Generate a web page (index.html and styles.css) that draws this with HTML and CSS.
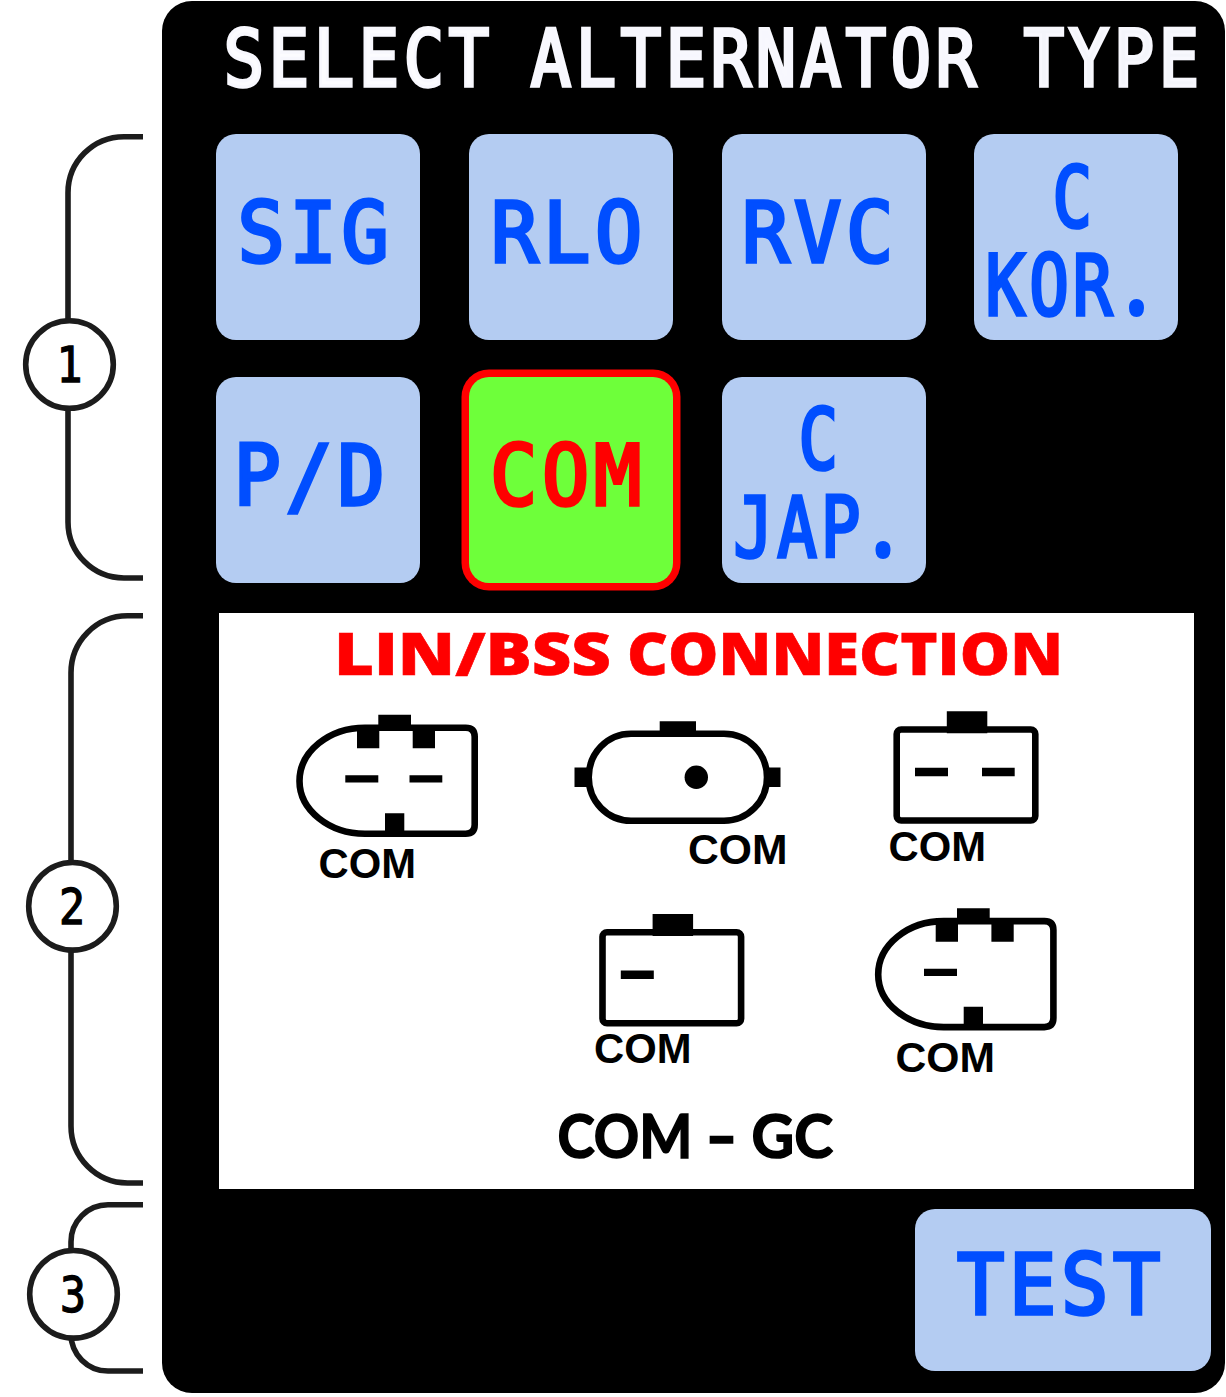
FILE: index.html
```html
<!DOCTYPE html>
<html lang="en">
<head>
<meta charset="utf-8">
<title>Select alternator type</title>
<link rel="stylesheet" href="styles.css">
</head>
<body>
<main class="page">
  <svg class="callouts" viewBox="0 0 162 1397">
    <g class="bracket">
      <path d="M143 136.7H124A56 56 0 0 0 68 192.700V522A56 56 0 0 0 124 578H143"/>
      <path d="M143 615.800H127.500A56.500 57 0 0 0 71 672.800V1126A56.500 57 0 0 0 127.500 1183H143"/>
      <path d="M143 1204.800H108A37 37 0 0 0 71 1241.800V1334A37 37 0 0 0 108 1371H143"/>
      <circle cx="69.500" cy="364.500" r="43.800"/>
      <circle cx="72.500" cy="906.300" r="43.800"/>
      <circle cx="73.500" cy="1294.300" r="43.800"/>
    </g>
    <g class="number">
      <text x="56.500" y="381.500" textLength="26" lengthAdjust="spacingAndGlyphs">1</text>
      <text x="59" y="923.500" textLength="26" lengthAdjust="spacingAndGlyphs">2</text>
      <text x="60" y="1311.500" textLength="26" lengthAdjust="spacingAndGlyphs">3</text>
    </g>
  </svg>

  <section class="device">
    <svg class="title" viewBox="162 1 1063 133">
      <text x="223.500" y="85.500" textLength="270" lengthAdjust="spacingAndGlyphs" fill="#fcfcff">SELECT</text>
      <text x="530.500" y="85.500" textLength="450" lengthAdjust="spacingAndGlyphs" fill="#f7f7fe">ALTERNATOR</text>
      <text x="1023.500" y="85.500" textLength="180" lengthAdjust="spacingAndGlyphs" fill="#f4f5fb">TYPE</text>
    </svg>

    <div class="types">
      <button class="key"><svg viewBox="216 134 204 206"><text x="237.500" y="261.500" textLength="156" lengthAdjust="spacingAndGlyphs">SIG</text></svg></button>
      <button class="key"><svg viewBox="469 134 204 206"><text x="491" y="261.500" textLength="156" lengthAdjust="spacingAndGlyphs">RLO</text></svg></button>
      <button class="key"><svg viewBox="722 134 204 206"><text x="742" y="261.500" textLength="156" lengthAdjust="spacingAndGlyphs">RVC</text></svg></button>
      <button class="key"><svg viewBox="974 134 204 206">
        <text x="1052.500" y="226.500" textLength="43.500" lengthAdjust="spacingAndGlyphs">C</text>
        <text x="985.500" y="314.500" textLength="131" lengthAdjust="spacingAndGlyphs">KOR</text>
        <text class="dot" x="1136.500" y="315.500" textLength="25" lengthAdjust="spacingAndGlyphs">.</text></svg></button>
      <button class="key"><svg viewBox="216 377 204 206"><text x="233.500" y="504.500" textLength="156" lengthAdjust="spacingAndGlyphs">P/D</text></svg></button>
      <button class="key selected"><svg viewBox="469 377 204 206"><text x="490" y="504.500" textLength="156" lengthAdjust="spacingAndGlyphs">COM</text></svg></button>
      <button class="key"><svg viewBox="722 377 204 206">
        <text x="798.500" y="468.500" textLength="43.500" lengthAdjust="spacingAndGlyphs">C</text>
        <text x="733.500" y="556.500" textLength="131" lengthAdjust="spacingAndGlyphs">JAP</text>
        <text class="dot" x="883" y="557.500" textLength="25" lengthAdjust="spacingAndGlyphs">.</text></svg></button>
    </div>

    <svg class="diagram" viewBox="219 613 975 576">
      <defs>
        <g id="round-plug">
          <path class="shell" d="M365 727.700H465.700Q474.700 727.700 474.700 736.700V824.700Q474.700 833.700 465.700 833.700H365C329 833.700 299.500 810 299.500 781C299.500 751.500 329 727.700 365 727.700Z"/>
          <path d="M378.300 714.800H411V730H378.300ZM357 728H379.300V748.300H357ZM412.700 728H435V748.300H412.700ZM385 813.300H404.300V833H385ZM345.300 775.300H378.300V782.500H345.300Z"/>
        </g>
        <g id="square-plug">
          <rect class="shell" x="896.700" y="729.500" width="138.600" height="91" rx="4.500"/>
          <path d="M946.800 711.300H987.300V733.300H946.800ZM915 767.700H948V776.300H915Z"/>
        </g>
      </defs>
      <g class="heading">
        <text x="334" y="674.500" textLength="277" lengthAdjust="spacingAndGlyphs">LIN/BSS</text>
        <text x="627" y="674.500" textLength="436" lengthAdjust="spacingAndGlyphs">CONNECTION</text>
      </g>

      <use href="#round-plug"/>
      <path d="M409.500 775.300H442.300V782.500H409.500Z"/>

      <path class="shell" d="M631 733.700H724C748 733.700 767 753 767 777.200S748 820.700 724 820.700H631C607 820.700 588.700 801 588.700 777.200S607 733.700 631 733.700Z"/>
      <path d="M659.700 721.300H696V735H659.700ZM574.500 767.500H588V787H574.500ZM768 767.500H780.500V787H768Z"/>
      <circle cx="696.300" cy="777.200" r="11.700"/>

      <use href="#square-plug"/>
      <path d="M982 767.700H1014.700V776.300H982Z"/>

      <use href="#square-plug" x="-294.200" y="202.800"/>
      <use href="#round-plug" x="578.700" y="193.400"/>

      <g class="label">
        <text x="318.500" y="877.500" textLength="97.500" lengthAdjust="spacingAndGlyphs">COM</text>
        <text x="688" y="863.500" textLength="99.500" lengthAdjust="spacingAndGlyphs">COM</text>
        <text x="888.500" y="860.500" textLength="97.500" lengthAdjust="spacingAndGlyphs">COM</text>
        <text x="594" y="1062.500" textLength="97.500" lengthAdjust="spacingAndGlyphs">COM</text>
        <text x="895.500" y="1071.500" textLength="99.500" lengthAdjust="spacingAndGlyphs">COM</text>
      </g>
      <g class="caption">
        <text x="557.500" y="1158" textLength="135" lengthAdjust="spacingAndGlyphs">COM</text>
        <text x="706" y="1158" textLength="31" lengthAdjust="spacingAndGlyphs">-</text>
        <text x="751.500" y="1158" textLength="81.500" lengthAdjust="spacingAndGlyphs">GC</text>
      </g>
    </svg>

    <footer class="actions">
      <button class="key test"><svg viewBox="915 1209 296 162"><text x="957" y="1313.500" textLength="208" lengthAdjust="spacingAndGlyphs">TEST</text></svg></button>
    </footer>
  </section>
</main>
</body>
</html>
```
FILE: styles.css
```css
* {
  box-sizing: border-box;
}

body {
  margin: 0;
  background: #fff;
}

.page {
  display: flex;
  width: 1226px;
  height: 1397px;
}

svg {
  display: block;
}

.callouts {
  flex: none;
  width: 162px;
  height: 1397px;
}

.bracket {
  fill: none;
  stroke: #1c1c1c;
  stroke-width: 5.6;
}

.bracket circle {
  fill: #fff;
}

.number {
  font: 49px "DejaVu Sans Mono", monospace;
  stroke: #000;
  stroke-width: 1.3;
}

.device {
  display: flex;
  flex-direction: column;
  width: 1063px;
  height: 1392px;
  margin-top: 1px;
  border-radius: 30px;
  background: #000;
}

.title {
  width: 1063px;
  height: 133px;
  font: 79.2px "DejaVu Sans Mono", monospace;
  letter-spacing: 5px;
  stroke: #f8f8fe;
  stroke-width: 3.4;
}

.types {
  display: grid;
  grid-template-columns: repeat(4, 204px);
  grid-auto-rows: 206px;
  gap: 37px 48.8px;
  margin-left: 54px;
}

.key {
  padding: 0;
  border: 0;
  border-radius: 20px;
  background: #b4ccf2;
  color: #004eff;
  font: 83px "DejaVu Sans Mono", monospace;
}

.key svg {
  width: 100%;
  height: 100%;
  fill: currentColor;
  stroke: currentColor;
  stroke-width: 3.6;
  letter-spacing: 5px;
}

.key .dot {
  font: 700 108px "Open Sans", sans-serif;
  letter-spacing: 0;
  text-anchor: middle;
  stroke: none;
}

.selected {
  background: #6eff3a;
  color: #f00;
  box-shadow: 0 0 0 7.5px #f00;
}

.diagram {
  width: 975px;
  height: 576px;
  margin: 30px 0 0 57px;
  background: #fff;
}

.shell {
  fill: none;
  stroke: #000;
  stroke-width: 6.6;
}

.heading {
  font: 800 57.5px "Open Sans", sans-serif;
  fill: #f00;
  stroke: #f00;
  stroke-width: 0.6;
}

.label {
  font: 700 43px "Liberation Sans", Arial, sans-serif;
}

.caption {
  font: 700 62px Lato, sans-serif;
  stroke: #000;
  stroke-width: 1.6;
}

.actions {
  display: flex;
  justify-content: flex-end;
  padding: 20px 14px 0 0;
}

.test {
  width: 296px;
  height: 162px;
}
```
